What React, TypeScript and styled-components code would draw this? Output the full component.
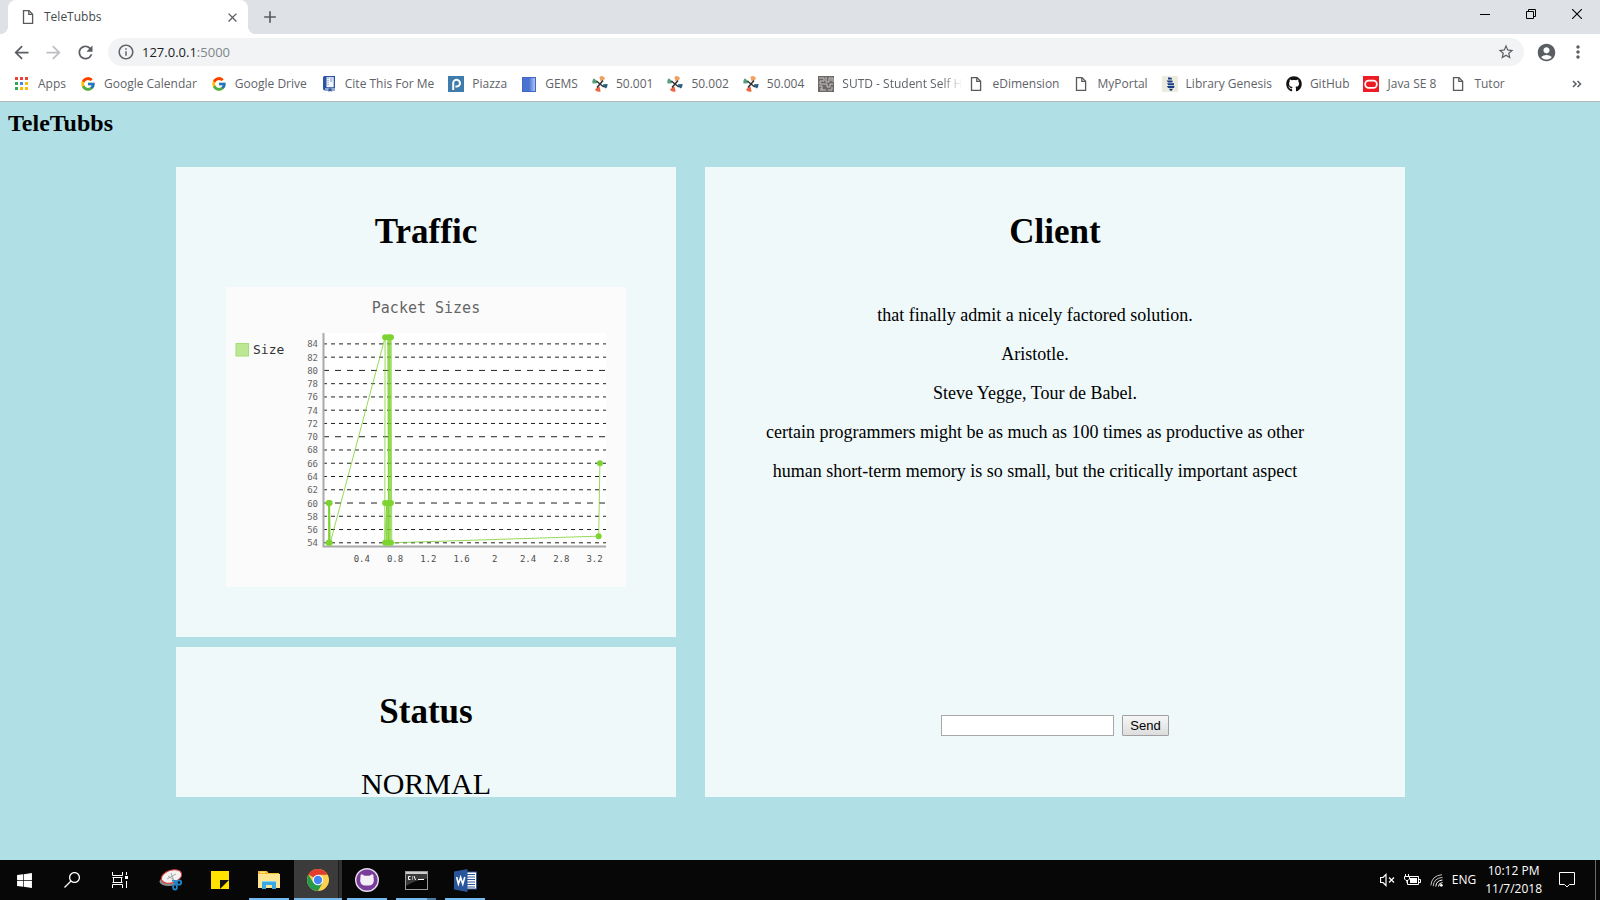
import React from "react";
import styled, { createGlobalStyle, css } from "styled-components";
import {
  MdAccountCircle,
  MdAdd,
  MdArrowBack,
  MdArrowForward,
  MdClose,
  MdInfoOutline,
  MdMoreVert,
  MdRefresh,
  MdStarBorder,
} from "react-icons/md";
import { FcGoogle } from "react-icons/fc";
import { FaGithub, FaWindows } from "react-icons/fa";

const uiFont = `"Segoe UI", "Open Sans", "Noto Sans", sans-serif`;
const pageFont = `"Liberation Serif", "Times New Roman", serif`;
const monoFont = `Consolas, "DejaVu Sans Mono", monospace`;

const GlobalStyle = createGlobalStyle`
  * { box-sizing: border-box; }
  body { margin: 0; background: #b0e0e6; }
  button { font: inherit; color: inherit; border: 0; padding: 0; background: none; }
  svg { display: block; flex: none; }
`;

const Screen = styled.div`
  min-height: 100vh;
  display: flex;
  flex-direction: column;
`;

/* ---------- browser window ---------- */

const TabStrip = styled.div`
  display: flex;
  height: 34px;
  padding-left: 8px;
  background: #dee1e6;
  font: 12px/34px ${uiFont};
`;

const Tab = styled.div`
  position: relative;
  display: flex;
  align-items: center;
  width: 240px;
  padding: 0 8px 0 12px;
  gap: 8px;
  background: #fff;
  border-radius: 8px 8px 0 0;
  color: #45494d;

  &::before,
  &::after {
    content: "";
    position: absolute;
    bottom: 0;
    width: 8px;
    height: 8px;
  }
  &::before {
    right: 100%;
    background: radial-gradient(circle at 0 0, transparent 8px, #fff 8px);
  }
  &::after {
    left: 100%;
    background: radial-gradient(circle at 100% 0, transparent 8px, #fff 8px);
  }
`;

const TabTitle = styled.span`
  flex: 1;
`;

const IconButton = styled.button<{ $size: number; $faded?: boolean }>`
  display: flex;
  align-items: center;
  justify-content: center;
  flex: none;
  width: ${(p) => p.$size}px;
  height: ${(p) => p.$size}px;
  color: ${(p) => (p.$faded ? "#bdbfc2" : "#5a5e63")};
`;

const NewTab = styled(IconButton)`
  margin: 1px 0 0 6px;
`;

const WindowControls = styled.div`
  display: flex;
  margin-left: auto;
`;

const WindowButton = styled.button`
  display: flex;
  align-items: center;
  justify-content: center;
  width: 46px;
  height: 28px;
`;

const Toolbar = styled.div`
  display: flex;
  align-items: center;
  height: 36px;
  padding: 0 6px 0 5px;
  background: #fff;
`;

const Omnibox = styled.div`
  display: flex;
  align-items: center;
  flex: 1;
  height: 28px;
  margin: 0 6px 0 7px;
  padding: 0 9px;
  gap: 7px;
  border-radius: 14px;
  background: #f1f3f4;
  color: #5f6368;
  font: 13px/28px ${uiFont};
`;

const Address = styled.span`
  flex: 1;
  color: #202124;
`;

const Port = styled.span`
  color: #80868b;
`;

const BookmarkBar = styled.nav`
  display: flex;
  align-items: center;
  gap: 14px;
  height: 32px;
  padding: 0 18px 4px 14px;
  border-bottom: 1px solid #b6b4b6;
  background: #fff;
  font: 12px/26px ${uiFont};
  color: #5f6368;
`;

const Bookmark = styled.a<{ $fading?: boolean }>`
  display: flex;
  align-items: center;
  flex: none;
  gap: 8px;
  color: inherit;
  text-decoration: none;
  white-space: nowrap;
  ${(p) =>
    p.$fading &&
    css`
      margin-right: -8px;
      mask-image: linear-gradient(to left, transparent, #000 20px);
    `}
`;

const More = styled.button`
  margin-left: auto;
  color: #5f6368;
`;

/* ---------- page ---------- */

const Page = styled.div`
  flex: 1;
  padding: 7px 8px 63px;
  color: #000;
  font-family: ${pageFont};
`;

const SiteTitle = styled.h2`
  margin: 0 0 30px;
  font-size: 24px;
  line-height: 28px;
`;

const Dashboard = styled.main`
  display: grid;
  grid-template-columns: minmax(0, 500px) minmax(0, 700px);
  justify-content: center;
  column-gap: 29px;
  padding-right: 19px;
`;

const Column = styled.div`
  display: flex;
  flex-direction: column;
  gap: 10px;
`;

const Panel = styled.section<{ $short?: boolean }>`
  display: flex;
  flex-direction: column;
  align-items: center;
  padding: 45px 50px ${(p) => (p.$short ? 0 : 50)}px;
  height: ${(p) => (p.$short ? "150px" : "auto")};
  background: rgba(255, 255, 255, 0.8);
`;

const PanelTitle = styled.h1`
  margin: 0 0 35px;
  font-size: 35px;
  line-height: 40px;
`;

const StatusText = styled.p`
  margin: 0;
  font-size: 30px;
  line-height: 34px;
`;

const ClientPanel = styled(Panel)`
  padding-bottom: 61px;
`;

const Messages = styled.div`
  display: flex;
  flex-direction: column;
  gap: 18px;
  padding: 18px 40px 18px 0;
  text-align: center;
  font-size: 18px;
  line-height: 21px;
`;

const Message = styled.p`
  margin: 0;
`;

const SendForm = styled.form`
  display: flex;
  gap: 8px;
  margin-top: auto;
`;

const MessageInput = styled.input`
  width: 173px;
  height: 21px;
  padding: 1px;
  border: 1px solid #a9a9a9;
  background: #fff;
`;

const SendButton = styled.button`
  height: 21px;
  padding: 0 7px;
  border: 1px solid #a0a0a0;
  border-radius: 1px;
  background: linear-gradient(#f6f6f6, #dddddd);
  color: #000;
  font: 13px/19px "Liberation Sans", Arial, sans-serif;
`;

/* ---------- chart ---------- */

const ChartSvg = styled.svg`
  width: 400px;
  max-width: 100%;
  height: auto;
  background: #fbfbfb;
  font-family: ${monoFont};
`;

const yTicks = [54, 56, 58, 60, 62, 64, 66, 68, 70, 72, 74, 76, 78, 80, 82, 84];
const xTicks = [0.4, 0.8, 1.2, 1.6, 2, 2.4, 2.8, 3.2];
const yAt = (v: number) => 255.8 - (v - 54) * 6.63;
const xAt = (v: number) => 102.6 + v * 83.1;

const packets: [number, number][] = [
  [0, 60], [0.002, 54], [0.005, 60], [0.01, 54], [0.012, 60], [0.02, 54],
  [0.68, 85], [0.676, 54], [0.7, 60], [0.7, 54], [0.705, 60], [0.705, 54],
  [0.72, 54], [0.715, 85], [0.725, 54], [0.73, 85],
  [0.74, 54], [0.75, 85], [0.76, 54],
  [3.25, 55], [3.265, 66],
];

const dots: [number, number][] = [
  [0, 60], [0.012, 60], [0, 54], [0.012, 54],
  [0.68, 85], [0.72, 85], [0.75, 85],
  [0.68, 60], [0.72, 60], [0.75, 60],
  [0.68, 54], [0.72, 54], [0.75, 54],
  [3.25, 55], [3.265, 66],
];

function PacketChart() {
  return (
    <ChartSvg viewBox="0 0 400 300" role="img" aria-label="Packet Sizes">
      <rect x="97" y="46" width="283" height="214" fill="#fff" />
      <text x="200" y="26" fontSize="15" textAnchor="middle" fill="#666">
        Packet Sizes
      </text>
      <rect x="10" y="56.5" width="12.5" height="12.5" fill="#bce896" stroke="#a5de73" />
      <text x="27" y="67" fontSize="13" fill="#333">
        Size
      </text>
      {yTicks.map((v) => (
        <g key={v}>
          <line
            x1="97"
            x2="380"
            y1={yAt(v)}
            y2={yAt(v)}
            stroke="rgba(0,0,0,0.87)"
            strokeDasharray={v % 10 === 0 ? "6 6" : "4 4"}
          />
          <text x="92" y={yAt(v) + 3.5} fontSize="9" textAnchor="end" fill="#666">
            {v}
          </text>
        </g>
      ))}
      {xTicks.map((v) => (
        <text key={v} x={xAt(v)} y="275" fontSize="9" textAnchor="middle" fill="#4d4d4d">
          {v}
        </text>
      ))}
      <path d="M97.5 46V259.5H380" fill="none" stroke="#aaa" strokeWidth="2" />
      <polyline
        points={packets.map(([x, y]) => `${xAt(x)},${yAt(y)}`).join(" ")}
        fill="none"
        stroke="#7dcf30"
        strokeOpacity="0.8"
        strokeWidth="1"
      />
      {dots.map(([x, y]) => (
        <circle key={`${x}-${y}`} cx={xAt(x)} cy={yAt(y)} r="3" fill="#7dd32f" />
      ))}
    </ChartSvg>
  );
}

/* ---------- favicons ---------- */

const PageIcon = () => (
  <svg width="16" height="16" viewBox="0 0 16 16" fill="none" stroke="#5a5a5a" strokeWidth="1.3">
    <path d="M3.5 1.6H9L12.6 5.2V14.4H3.5Z" />
    <path d="M8.8 1.8V5.4H12.4" />
  </svg>
);

const AppsIcon = () => (
  <svg width="16" height="16" viewBox="0 0 16 16">
    {["#ea4335", "#ea4335", "#ea4335", "#34a853", "#4285f4", "#fbbc05", "#34a853", "#fbbc05", "#fbbc05"].map(
      (c, i) => (
        <rect key={i} x={1 + (i % 3) * 5} y={1 + Math.floor(i / 3) * 5} width="3" height="3" fill={c} />
      ),
    )}
  </svg>
);

const CiteIcon = () => (
  <svg width="16" height="16" viewBox="0 0 16 16">
    <path d="M2 1.5Q2 0 3.5 0H14V12.5H4V13.5H14V14.5H4Q2 14.5 2 12.5Z" fill="#2b55a2" />
    <rect x="5.5" y="1.2" width="7.2" height="10" fill="#f3f6fc" />
    <path d="M6.5 2.5h1.2M6.5 4.5h1.2M6.5 6.5h1.2M6.5 8.5h1.2M9 3h2.5M9 5h2.5" stroke="#7d97c9" />
    <path d="M7.5 12.5h3V16L9 14.8L7.5 16z" fill="#2b55a2" />
  </svg>
);

const PiazzaIcon = () => (
  <svg width="16" height="16" viewBox="0 0 16 16">
    <rect width="16" height="16" fill="#3f7cac" />
    <path d="M5.2 14V7a3.4 3.4 0 1 1 3.4 3.6H7.4" fill="none" stroke="#fff" strokeWidth="2" />
  </svg>
);

const GemsIcon = () => (
  <svg width="16" height="16" viewBox="0 0 16 16">
    <defs>
      <linearGradient id="gems">
        <stop offset="0.5" stopColor="#4a72d2" />
        <stop offset="0.9" stopColor="#a9bff0" />
        <stop offset="1" stopColor="#4a72d2" />
      </linearGradient>
    </defs>
    <rect x="1" y="1" width="14" height="15" fill="url(#gems)" />
    <rect x="1.5" y="1.5" width="13" height="14" fill="none" stroke="#4167c4" />
  </svg>
);

const PinwheelIcon = () => (
  <svg width="16" height="16" viewBox="0 0 16 16">
    <path d="M8.4 5L7.4 1.2Q8.4 0 10.2.1Q12.8.5 13 3L10.6 4.6Z" fill="#f0a060" />
    <path d="M5 7.2L.6 7.4Q-.4 4.6 1.8 2.2L4.4 4.4Z" fill="#549c7c" />
    <path d="M11 8.2L15.6 8Q15.8 10.8 13.8 12.6L11.4 10.8Z" fill="#28607f" />
    <path d="M7.6 10.8L8.6 15.4Q5.2 16.4 2.8 13.8L5.2 11.4Z" fill="#ee6343" />
    <path
      d="M8 8L11 4.4M8 8L4.4 5M8 8L11.8 11M8 8L5 11.6"
      stroke="#303030"
      strokeWidth="1.5"
    />
  </svg>
);

const QrIcon = () => (
  <svg width="16" height="16" viewBox="0 0 16 16">
    <rect width="16" height="16" fill="#6d6969" />
    <path
      d="M1 2h5v3H2v3h4M8 1v5h3V2h4v4M1 10h3v4h4M6 8h3v3h3V8h3M10 14h4v-3M3 12v3M12 4h2"
      fill="none"
      stroke="#c9c5c5"
    />
  </svg>
);

const GenesisIcon = () => (
  <svg width="16" height="16" viewBox="0 0 16 16">
    <rect width="16" height="16" fill="#ecebdd" />
    <path
      d="M6 1.6Q9 1 10 2.4V3.6H6ZM4.6 4.4H10.5V6.4H6ZM5 7.2H12V9.2H6.4ZM5 10H12.5L12 12H6ZM7 12.8H11L9.4 15L8 14.6Z"
      fill="#173f86"
    />
  </svg>
);

const OracleIcon = () => (
  <svg width="16" height="16" viewBox="0 0 16 16">
    <rect width="16" height="16" fill="#ed1c24" />
    <rect x="2.2" y="4.7" width="11.6" height="7.2" rx="3.4" fill="none" stroke="#fff" strokeWidth="1.7" />
  </svg>
);

const GoogleIcon = () => <FcGoogle size={16} />;
const GithubIcon = () => <FaGithub size={16} color="#111" />;

const bookmarks: { label: string; icon: React.FC; fading?: boolean }[] = [
  { label: "Apps", icon: AppsIcon },
  { label: "Google Calendar", icon: GoogleIcon },
  { label: "Google Drive", icon: GoogleIcon },
  { label: "Cite This For Me", icon: CiteIcon },
  { label: "Piazza", icon: PiazzaIcon },
  { label: "GEMS", icon: GemsIcon },
  { label: "50.001", icon: PinwheelIcon },
  { label: "50.002", icon: PinwheelIcon },
  { label: "50.004", icon: PinwheelIcon },
  { label: "SUTD - Student Self H", icon: QrIcon, fading: true },
  { label: "eDimension", icon: PageIcon },
  { label: "MyPortal", icon: PageIcon },
  { label: "Library Genesis", icon: GenesisIcon },
  { label: "GitHub", icon: GithubIcon },
  { label: "Java SE 8", icon: OracleIcon },
  { label: "Tutor", icon: PageIcon },
];

/* ---------- taskbar ---------- */

const Taskbar = styled.footer`
  display: flex;
  height: 40px;
  background: #070707;
  color: #fff;
  font: 12px/18px ${uiFont};
`;

const TaskGroup = styled.div<{ $gap: number }>`
  display: flex;
  gap: ${(p) => p.$gap}px;
  margin-right: 3px;
`;

const TaskButton = styled.button<{ $state?: "open" | "active" | "stacked" }>`
  position: relative;
  display: flex;
  align-items: center;
  justify-content: center;
  width: 48px;
  background: ${(p) =>
    p.$state === "active" ? "linear-gradient(to right, #3b3b3b 44px, #1c1c1c 44px, #1c1c1c 45px, #303030 45px)" : "none"};

  &::after {
    content: "";
    position: absolute;
    bottom: 0;
    left: ${(p) => (p.$state === "active" ? 0 : 4)}px;
    right: ${(p) => (p.$state === "active" ? 0 : 4)}px;
    height: ${(p) => (p.$state ? 2 : 0)}px;
    background: ${(p) =>
      p.$state === "stacked" ? "linear-gradient(to right, #76b9ed 31px, #4d7da3 31px)" : "#76b9ed"};
  }
`;

const Tray = styled.div`
  display: flex;
  align-items: center;
  margin-left: auto;
  gap: 9px;
`;

const Clock = styled.time`
  margin-right: 8px;
  text-align: center;
`;

const ShowDesktop = styled.button`
  width: 5px;
  height: 40px;
  margin-left: 11px;
  border-left: 1px solid #6a6a6a;
`;

const SearchGlyph = () => (
  <svg width="16" height="16" viewBox="0 0 16 16" fill="none" stroke="#fff" strokeWidth="1.3">
    <circle cx="10.5" cy="5.5" r="4.9" />
    <path d="M7 9L.5 15.5" />
  </svg>
);

const TaskViewGlyph = () => (
  <svg width="16" height="16" viewBox="0 0 16 16" fill="none" stroke="#fff">
    <path d="M.5 0V3.5H10.5V0M.5 16V12.5H10.5V16M1.5 5V11M9.5 5V11M.5 5.5H10.5M.5 10.5H10.5M14.5 0V3M14.5 9V16" />
    <rect x="13" y="4" width="3" height="3" fill="#fff" stroke="none" />
  </svg>
);

const SnipIcon = () => (
  <svg width="24" height="24" viewBox="0 0 24 24">
    <ellipse cx="9.5" cy="13.5" rx="9" ry="4.5" fill="#8d8d8d" />
    <ellipse
      cx="12.5"
      cy="8.5"
      rx="10.5"
      ry="6.3"
      transform="rotate(-18 12.5 8.5)"
      fill="#f4f1f1"
      stroke="#d6383b"
      strokeWidth="1"
    />
    <path d="M8 11L17 6M12 5L15 13M9 8L15 12" stroke="#a3a8aa" strokeWidth="1" />
    <g fill="none" stroke="#1d87cf" strokeWidth="1.8">
      <circle cx="20" cy="14.5" r="2.2" />
      <ellipse cx="16" cy="19" rx="1.9" ry="2.6" />
      <path d="M18.2 14L13 12.5M16.5 16.6L16 12" />
    </g>
  </svg>
);

const StickyIcon = () => (
  <svg width="18" height="18" viewBox="0 0 18 18">
    <path d="M0 0H18V9H9V18H0Z" fill="#ffe200" />
    <path d="M9 9H18L9 18Z" fill="#111" />
    <path d="M18 9V18H9Z" fill="#ffe200" />
  </svg>
);

const ExplorerIcon = () => (
  <svg width="22" height="18" viewBox="0 0 22 18">
    <path d="M0 0H9L10.5 2H21V5H0Z" fill="#f0bb2c" />
    <rect y="3" width="22" height="14" fill="#fde592" />
    <path d="M2 1.2H7" stroke="#fff3b8" />
    <path d="M4 18V10H18V18H14V14H8V18Z" fill="#38a9e4" />
    <path d="M4 10.5H18" stroke="#7fd0f4" />
  </svg>
);

const ChromeIcon = () => (
  <svg width="22" height="22" viewBox="0 0 22 22">
    <circle cx="11" cy="11" r="11" fill="#fdd04d" />
    <path d="M11 11L1.5 5.5A11 11 0 0 1 20.6 5.7H11Z" fill="#e33b2e" />
    <path d="M1.5 5.5A11 11 0 0 0 11 22L15.6 13.7L6.2 13.5Z" fill="#26994a" />
    <circle cx="11" cy="11" r="5.2" fill="#fff" />
    <circle cx="11" cy="11" r="4.2" fill="#4386f5" />
  </svg>
);

const GithubDesktopIcon = () => (
  <svg width="24" height="24" viewBox="0 0 24 24">
    <circle cx="12" cy="12" r="11.3" fill="#7b3d9c" stroke="#e4dcea" strokeWidth="1.4" />
    <path
      d="M5.6 7.2Q6 6 7.4 6.4L9.6 7.8H14.4L16.6 6.4Q18 6 18.4 7.2L18.6 10.2Q19.4 13 18 15.4Q16.4 17.6 12 17.6Q7.6 17.6 6 15.4Q4.6 13 5.4 10.2Z"
      fill="#f4eff6"
    />
  </svg>
);

const TerminalIcon = () => (
  <svg width="23" height="19" viewBox="0 0 23 19">
    <rect x=".5" y=".5" width="22" height="18" fill="#050505" stroke="#9a9a9a" />
    <path d="M1 1H22V3H1Z" fill="#c9cdd0" />
    <path d="M1 3H22V8Q10 9 1 15Z" fill="#3a3a3a" />
    <path d="M5.5 5.5H3.5V8.5H5.5M7.5 5.5V6.5M7.5 7.5V8.5M9 5L10.5 9M13 8.5H19" fill="none" stroke="#fff" />
  </svg>
);

const WordIcon = () => (
  <svg width="23" height="23" viewBox="0 0 23 23">
    <rect x="11" y="3" width="11.5" height="17" fill="#fff" stroke="#2a5699" />
    <path d="M13 5.5H21M13 8H21M13 10.5H21M13 13H21M13 15.5H21M13 18H21" stroke="#2a5699" />
    <path d="M0 2.5L13.5 0V23L0 20.5Z" fill="#2a5699" />
    <path d="M2.6 8L4.4 15L6.6 8.4L8.8 15L10.8 8" fill="none" stroke="#fff" strokeWidth="1.6" />
  </svg>
);

const SpeakerGlyph = () => (
  <svg width="15" height="14" viewBox="0 0 15 14" fill="none" stroke="#fff" strokeWidth="1.2">
    <path d="M.5 4.5H3L6 1.5V12.5L3 9.5H.5Z" />
    <path d="M9 4.5L14 9.5M14 4.5L9 9.5" />
  </svg>
);

const BatteryGlyph = () => (
  <svg width="17" height="12" viewBox="0 0 17 12" fill="none" stroke="#fff">
    <path d="M5.5 2.5H14.5V10.5H3.5V7M15 5.5H16.5V8.5H15M1.5 0V2.5M4.5 0V2.5M.5 2.5H5.5V5L4 6.5H2L.5 5ZM3 6.5V9" />
    <rect x="6" y="4" width="7" height="5" fill="#fff" stroke="none" />
  </svg>
);

const WifiGlyph = () => (
  <svg width="13" height="13" viewBox="0 0 13 13" fill="none" stroke="#fff">
    <path d="M8.5 12.5Q8.5 9 12.5 8.5" />
    <path d="M5.8 12.5Q6.2 6.5 12.5 6" />
    <path d="M3.2 12.2Q3.8 4 12.5 3.4M.8 11.4Q1.8 1.6 12 .7" stroke="#c4c4c4" />
    <circle cx="11.3" cy="11.3" r="1.4" fill="#fff" stroke="none" />
  </svg>
);

const ActionGlyph = () => (
  <svg width="16" height="16" viewBox="0 0 16 16" fill="none" stroke="#fff">
    <path d="M.5.5H15.5V12.5H10.5L8 15L5.5 12.5H.5Z" />
  </svg>
);

const messages = [
  "that finally admit a nicely factored solution.",
  "Aristotle.",
  "Steve Yegge, Tour de Babel.",
  "certain programmers might be as much as 100 times as productive as other",
  "human short-term memory is so small, but the critically important aspect",
];

export default function App() {
  return (
    <Screen>
      <GlobalStyle />
      <header>
        <TabStrip>
          <Tab>
            <PageIcon />
            <TabTitle>TeleTubbs</TabTitle>
            <IconButton $size={16} aria-label="Close tab">
              <MdClose size={15} />
            </IconButton>
          </Tab>
          <NewTab $size={32} aria-label="New tab">
            <MdAdd size={20} />
          </NewTab>
          <WindowControls>
            <WindowButton aria-label="Minimize">
              <svg width="10" height="10" viewBox="0 0 10 10" stroke="#000">
                <path d="M0 5.5H10" />
              </svg>
            </WindowButton>
            <WindowButton aria-label="Restore">
              <svg width="10" height="10" viewBox="0 0 10 10" fill="none" stroke="#000">
                <path d="M.5 2.5H7.5V9.5H.5ZM2.5 2.5V.5H9.5V7.5H7.5" />
              </svg>
            </WindowButton>
            <WindowButton aria-label="Close">
              <svg width="10" height="10" viewBox="0 0 10 10" stroke="#000" strokeWidth="1.1">
                <path d="M0 0L10 10M10 0L0 10" />
              </svg>
            </WindowButton>
          </WindowControls>
        </TabStrip>
        <Toolbar>
          <IconButton $size={32} aria-label="Back">
            <MdArrowBack size={21} />
          </IconButton>
          <IconButton $size={32} $faded aria-label="Forward">
            <MdArrowForward size={21} />
          </IconButton>
          <IconButton $size={32} aria-label="Reload">
            <MdRefresh size={21} />
          </IconButton>
          <Omnibox>
            <MdInfoOutline size={18} />
            <Address>
              127.0.0.1<Port>:5000</Port>
            </Address>
            <IconButton $size={18} aria-label="Bookmark this page">
              <MdStarBorder size={18} />
            </IconButton>
          </Omnibox>
          <IconButton $size={32} aria-label="Profile">
            <MdAccountCircle size={21} />
          </IconButton>
          <IconButton $size={32} aria-label="Menu">
            <MdMoreVert size={20} />
          </IconButton>
        </Toolbar>
        <BookmarkBar>
          {bookmarks.map(({ label, icon: Icon, fading }) => (
            <Bookmark key={label} href="#" $fading={fading}>
              <Icon />
              {label}
            </Bookmark>
          ))}
          <More aria-label="More bookmarks">
            <svg width="10" height="8" viewBox="0 0 10 8" fill="none" stroke="#5f6368" strokeWidth="1.6">
              <path d="M1 1L4 4L1 7M5.5 1L8.5 4L5.5 7" />
            </svg>
          </More>
        </BookmarkBar>
      </header>

      <Page>
        <SiteTitle>TeleTubbs</SiteTitle>
        <Dashboard>
          <Column>
            <Panel>
              <PanelTitle>Traffic</PanelTitle>
              <PacketChart />
            </Panel>
            <Panel $short>
              <PanelTitle>Status</PanelTitle>
              <StatusText>NORMAL</StatusText>
            </Panel>
          </Column>
          <ClientPanel>
            <PanelTitle>Client</PanelTitle>
            <Messages>
              {messages.map((m) => (
                <Message key={m}>{m}</Message>
              ))}
            </Messages>
            <SendForm onSubmit={(e) => e.preventDefault()}>
              <MessageInput type="text" aria-label="Message" />
              <SendButton type="submit">Send</SendButton>
            </SendForm>
          </ClientPanel>
        </Dashboard>
      </Page>

      <Taskbar>
        <TaskGroup $gap={0}>
          <TaskButton aria-label="Start">
            <FaWindows size={17} />
          </TaskButton>
          <TaskButton aria-label="Search">
            <SearchGlyph />
          </TaskButton>
          <TaskButton aria-label="Task view">
            <TaskViewGlyph />
          </TaskButton>
        </TaskGroup>
        <TaskGroup $gap={1}>
          <TaskButton aria-label="Snipping Tool">
            <SnipIcon />
          </TaskButton>
          <TaskButton aria-label="Sticky Notes">
            <StickyIcon />
          </TaskButton>
          <TaskButton $state="open" aria-label="File Explorer">
            <ExplorerIcon />
          </TaskButton>
          <TaskButton $state="active" aria-label="Chrome">
            <ChromeIcon />
          </TaskButton>
          <TaskButton $state="open" aria-label="GitHub Desktop">
            <GithubDesktopIcon />
          </TaskButton>
          <TaskButton $state="stacked" aria-label="Command Prompt">
            <TerminalIcon />
          </TaskButton>
          <TaskButton $state="open" aria-label="Word">
            <WordIcon />
          </TaskButton>
        </TaskGroup>
        <Tray>
          <SpeakerGlyph />
          <BatteryGlyph />
          <WifiGlyph />
          <span>ENG</span>
          <Clock>
            10:12 PM
            <br />
            11/7/2018
          </Clock>
          <ActionGlyph />
          <ShowDesktop aria-label="Show desktop" />
        </Tray>
      </Taskbar>
    </Screen>
  );
}
